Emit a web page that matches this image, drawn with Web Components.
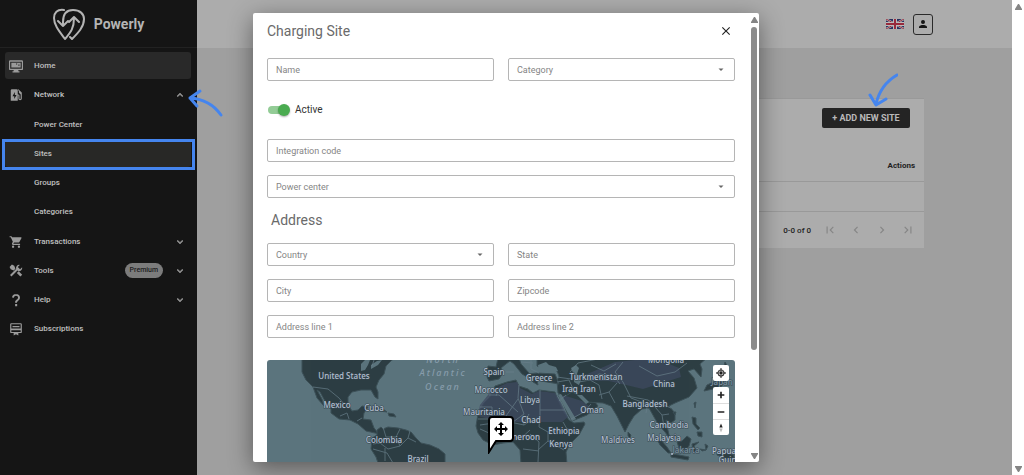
<!DOCTYPE html>
<html lang="en">
<head>
<meta charset="utf-8">
<title>Powerly</title>
<style>
html,body{margin:0;height:100%}
body{font-family:Roboto,"Liberation Sans",sans-serif;font-size:9px;background:#fff}
</style>
</head>
<body>
<power-app></power-app>
<script>
const define = (name, html, setup) => {
  const t = document.createElement('template');
  customElements.define(name, class extends HTMLElement {
    connectedCallback() {
      if (this.shadowRoot) return;
      t.innerHTML = typeof html === 'function' ? html(this) : html;
      this.attachShadow({mode: 'open'}).append(t.content.cloneNode(true));
      if (setup) setup(this, this.shadowRoot);
    }
  });
};

const icons = {
  home: '<path fill-rule="evenodd" d="M2 2h20a2 2 0 0 1 2 2v13a2 2 0 0 1-2 2h-6v2h2v2H6v-2h2v-2H2a2 2 0 0 1-2-2V4a2 2 0 0 1 2-2zm0 2.500v12h20v-12zM4 6.500h16v8H4zm8 1v2h2v-2zm4 2v2h2v-2z"/>',
  station: '<path fill-rule="evenodd" d="M5 2h8a2 2 0 0 1 2 2v7h1a2 2 0 0 1 2 2v5a1 1 0 0 0 2 0V11l-3-3V5l-2-2 1-1 5 5a2 2 0 0 1 1 2v9a3 3 0 0 1-6 0v-5h-1v9H3V4a2 2 0 0 1 2-2zm5 5-4 7h3v5l4-7h-3z"/>',
  cart: '<path d="M7 18a2 2 0 1 0 0 4 2 2 0 0 0 0-4zM1 2v2h2l3.600 7.600-1.400 2.400C4.500 15.400 5.500 17 7 17h12v-2H7.400l1.200-2h7.400c.8 0 1.400-.4 1.800-1l3.500-6.500C21.700 4.800 21.200 4 20.400 4H5.200l-.9-2zm16 16a2 2 0 1 0 0 4 2 2 0 0 0 0-4z"/>',
  tools: '<path d="M3 20 14.500 8.500M9 9l-5-5" stroke="currentColor" stroke-width="3.500" fill="none"/><path d="M15 14l6 6" stroke="currentColor" stroke-width="4.500"/><path d="M22.500 5.500 19 9l-4-4 3.500-3.500a5.500 5.500 0 0 0-6 7.500l3 3a5.500 5.500 0 0 0 7-6.500zM1 5l4-4 4 2 2 5-3 3-5-2z"/>',
  help: '<path d="M10.500 19h3.500v3.500h-3.500zM12 1.500C8 1.500 5.500 4 5.200 7.500l3.200.6C8.600 6 10 4.600 12 4.600c2.100 0 3.500 1.200 3.500 3 0 1.600-.9 2.500-2.300 3.700-1.700 1.500-2.800 2.700-2.800 5.400h3.200c0-1.600.9-2.400 2.200-3.500 1.700-1.500 3-3 3-5.600 0-3.600-2.800-6.100-6.800-6.100z"/>',
  subs: '<path fill-rule="evenodd" d="M4 2h16a2 2 0 0 1 2 2v13a2 2 0 0 1-2 2h-4v4l-4-2-4 2v-4H4a2 2 0 0 1-2-2V4a2 2 0 0 1 2-2zm0 2v7h16V4zm0 10v3h16v-3zm2-7h12v2H6z"/>',
  up: '<path d="m12 8-6 6 1.500 1.500L12 11l4.500 4.500L18 14z" stroke="currentColor"/>',
  down: '<path d="M7.500 8.500 12 13l4.500-4.500L18 10l-6 6-6-6z" stroke="currentColor"/>',
  person: '<path d="M12 12a4 4 0 1 0 0-8 4 4 0 0 0 0 8zm0 2c-2.700 0-8 1.300-8 4v2h16v-2c0-2.700-5.300-4-8-4z"/>',
  close: '<path d="M19 6.400 17.600 5 12 10.600 6.400 5 5 6.400l5.600 5.600L5 17.600 6.400 19l5.600-5.600 5.600 5.600 1.400-1.400-5.600-5.600z"/>',
  caret: '<path d="m7 9 5 5 5-5z"/>',
  first: '<path d="M18.400 16.600 13.800 12l4.600-4.600L17 6l-6 6 6 6zM6 6h2v12H6z"/>',
  prev: '<path d="M15.400 7.400 14 6l-6 6 6 6 1.400-1.400L10.800 12z"/>',
  next: '<path d="M10 6 8.600 7.400l4.600 4.600-4.600 4.600L10 18l6-6z"/>',
  last: '<path d="M5.600 7.400l4.600 4.600-4.600 4.600L7 18l6-6-6-6zM16 6h2v12h-2z"/>',
  locate: '<path fill-rule="evenodd" d="M11 1h2v3a8 8 0 0 1 7 7h3v2h-3a8 8 0 0 1-7 7v3h-2v-3a8 8 0 0 1-7-7H1v-2h3a8 8 0 0 1 7-7zm1 5a6 6 0 1 0 0 12 6 6 0 0 0 0-12zm0 2.500a3.500 3.500 0 1 1 0 7 3.500 3.500 0 0 1 0-7z" stroke="currentColor"/>',
  plus: '<path d="M10 4h4v6h6v4h-6v6h-4v-6H4v-4h6z"/>',
  minus: '<path d="M4 10h16v4H4z"/>',
  compass: '<path d="m12 1 4 10H8z"/><path fill="#bbb" d="m12 23 4-10H8z"/>'
};
define('p-icon', el => `<style>:host{display:block;flex:none;width:var(--size,14px);height:var(--size,14px)}svg{display:block;width:100%;height:100%;fill:currentColor}</style>
<svg viewBox="0 0 24 24" aria-hidden="true">${icons[el.getAttribute('name')]}</svg>`);

define('brand-logo', `<style>
:host{display:flex;align-items:center;justify-content:center;gap:9px;height:47px;border-bottom:1px solid #222;color:#b4b4b4;font-size:14px;font-weight:700;line-height:20px}
svg{width:32px;height:32px;fill:none;stroke:currentColor;stroke-width:2;stroke-linecap:round;stroke-linejoin:round}
</style>
<svg viewBox="0 0 32 32" aria-hidden="true"><path d="M11 2C4 1 1 5 1 10c0 7 5 13 11 21 6-7 9-11 9-21M16 14l5-5 5 5"/><path d="M10 18v-4C10 6 13 2 20 2s11 4 11 9c0 8-6 14-12 20l-2-2M5 13l5 5 5-5"/></svg><span>Powerly</span>`);

define('nav-item', el => {
  const i = el.getAttribute('icon'), c = el.getAttribute('chevron');
  return `<style>
:host{display:block;position:relative}
a{display:flex;align-items:center;height:27px;padding:0 5px 0 4px;gap:11px;border-radius:3px;color:#c0c0c0;text-decoration:none;font-size:8px;font-weight:500;line-height:12px}
.text{flex:1}
.lead{color:#9b9b9b}
.blank{width:14px}
.chev{--size:12px;color:#999}
:host([active]) a{background:#292929}
:host([marked]) a{background:#282826}
:host([marked])::after{content:"";position:absolute;inset:-1px -4px -3px -3px;border:3px solid #4585ee;pointer-events:none}
</style>
<a href="#">${i ? `<p-icon class="lead" name="${i}"></p-icon>` : '<span class="blank"></span>'}<span class="text">${el.getAttribute('label')}</span><slot></slot>${c ? `<p-icon class="chev" name="${c}"></p-icon>` : ''}</a><slot name="note"></slot>`;
});

define('blue-arrow', el => `<style>:host{display:block;position:absolute;z-index:2;pointer-events:none}svg{display:block;fill:none;stroke:#4585ee;stroke-width:3;stroke-linecap:round;stroke-linejoin:round}</style>
${el.getAttribute('kind') === 'left'
  ? '<svg width="37" height="30" viewBox="0 0 37 30"><path d="M13 3 3 10l7 8M3 10c14 1 24 7 31 17"/></svg>'
  : '<svg width="31" height="35" viewBox="0 0 31 35"><path d="M3 22l6 10 10-6M9 31C12 18 18 9 30 2"/></svg>'}`);

define('side-bar', `<style>
:host{display:block;flex:none;width:197px;background:#151515}
nav{display:flex;flex-direction:column;gap:2px;padding:4px 6px 0 5px}
.sub{display:flex;flex-direction:column;gap:2px;margin:1px 0}
.pill{background:#7c7c7c;color:#1c1c1c;border-radius:8px;padding:0 5px;font-size:7px;line-height:15px}
blue-arrow{left:182px;top:7px}
</style>
<brand-logo></brand-logo>
<nav aria-label="Main">
<nav-item icon="home" label="Home" active></nav-item>
<nav-item icon="station" label="Network" chevron="up"><blue-arrow slot="note" kind="left"></blue-arrow></nav-item>
<div class="sub">
<nav-item label="Power Center"></nav-item><nav-item label="Sites" marked></nav-item><nav-item label="Groups"></nav-item><nav-item label="Categories"></nav-item>
</div>
<nav-item icon="cart" label="Transactions" chevron="down"></nav-item>
<nav-item icon="tools" label="Tools" chevron="down"><span class="pill">Premium</span></nav-item>
<nav-item icon="help" label="Help" chevron="down"></nav-item>
<nav-item icon="subs" label="Subscriptions"></nav-item>
</nav>`);

define('top-bar', `<style>
:host{display:flex;align-items:center;justify-content:flex-end;gap:9px;height:48px;padding-right:79px;background:#acacac}
button{width:20px;height:21px;padding:0;border:1px solid #2a2a2a;border-radius:3px;background:none;color:#151515;display:grid;place-items:center;--size:12px}
</style>
<svg width="18" height="10" viewBox="0 0 18 10" role="img" aria-label="English"><rect width="18" height="10" fill="#28315f"/><path d="M0 0l18 10M18 0 0 10" stroke="#bbb" stroke-width="2"/><path d="M0 0l18 10M18 0 0 10" stroke="#98303f"/><path d="M9 0v10M0 5h18" stroke="#bbb" stroke-width="4"/><path d="M9 0v10M0 5h18" stroke="#982a3c" stroke-width="2"/></svg>
<button aria-label="Account"><p-icon name="person"></p-icon></button>`);

define('sites-card', `<style>
:host{display:block;margin:50px 88px 0;background:#acacac;color:#222;border-top:1px solid #999}
.bar{position:relative;display:flex;justify-content:flex-end;padding:9px 14px;height:33px}
.add{width:88px;height:20px;padding:0;border:0;border-radius:2px;background:#242424;color:#b9b9b9;font:700 9px/20px Roboto,sans-serif;white-space:nowrap}
table{width:100%;border-collapse:collapse}
th{height:31px;padding:0 9px;text-align:right;font-size:8px;font-weight:700;border-bottom:1px solid #999}
td{height:29px;padding:0;border-bottom:1px solid #999}
.pages{display:flex;align-items:center;justify-content:flex-end;height:36px;padding-right:9px;gap:12px;font-size:8px;font-weight:500}
.pages button{border:0;padding:0;background:none;color:#858585;--size:14px}
blue-arrow{right:26px;top:-26px}
</style>
<div class="bar"><button class="add">+ ADD NEW SITE</button><blue-arrow kind="down"></blue-arrow></div>
<table><thead><tr><th>Actions</th></tr></thead><tbody><tr><td></td></tr></tbody></table>
<div class="pages"><span>0-0 of 0</span><button aria-label="First page"><p-icon name="first"></p-icon></button><button aria-label="Previous page"><p-icon name="prev"></p-icon></button><button aria-label="Next page"><p-icon name="next"></p-icon></button><button aria-label="Last page"><p-icon name="last"></p-icon></button></div>`);

define('scroll-rail', `<style>
:host{display:flex;flex-direction:column;align-items:center;justify-content:space-between;flex:none;padding:4px 0 3px;box-sizing:border-box}
svg{display:block;width:7px;height:6px;fill:#858585;flex:none}
.thumb{width:6px;height:var(--thumb,0px);border-radius:3px;background:#8b8b8b;margin-bottom:auto;margin-top:4px}
</style>
<svg viewBox="0 0 7 6"><path d="M3 0h1l3 5v1H0V5z"/></svg><div class="thumb"></div><svg viewBox="0 0 7 6"><path d="M3 6h1l3-5V0H0v1z"/></svg>`);

define('form-field', el => {
  const sel = el.hasAttribute('select'), l = el.getAttribute('label');
  return `<style>
:host{display:grid;min-width:0;height:23px;align-items:center}
:host([wide]){grid-column:1/-1}
input,select,label,p-icon{grid-area:1/1}
input,select{appearance:none;box-sizing:border-box;width:100%;height:23px;margin:0;padding:0 8px;border:1px solid #b5b5b5;border-radius:2px;background:#fff;color:#333;font:9px Roboto,sans-serif;outline:0}
label{padding-left:9px;color:#858585;font-size:9px;line-height:12px;pointer-events:none}
input:focus+label,input:not(:placeholder-shown)+label{visibility:hidden}
p-icon{--size:12px;justify-self:end;margin-right:8px;color:#666;pointer-events:none}
</style>
${sel ? '<select id="f"><option value=""></option></select>' : '<input id="f" type="text" placeholder=" ">'}<label for="f">${l}</label>${sel ? '<p-icon name="caret"></p-icon>' : ''}`;
});

define('toggle-switch', `<style>
:host{display:flex;align-items:center;grid-column:1/-1;gap:5px;height:32px;padding-left:1px;font-size:9px;line-height:14px;color:#333}
input{appearance:none;position:relative;margin:0;width:22px;height:12px;display:grid;align-items:center}
input::before,input::after{content:"";grid-area:1/1}
input::before{width:18px;height:8px;border-radius:4px;background:#93cc96}
input::after{width:12px;height:12px;border-radius:50%;background:#4aab50;justify-self:end;box-shadow:0 1px 2px #0005}
input:not(:checked)::after{justify-self:start;background:#eee}
label{font-size:10px}
</style><input id="s" type="checkbox" role="switch" checked><label for="s"><slot></slot></label>`);

const label = (x, y, s, cls = '') => `<text x="${x}" y="${y}" class="${cls}">${s}</text>`;
define('world-map', `<style>
:host{display:block;position:relative;overflow:hidden;border-radius:3px 3px 0 0;background:#5b747d}
.map{position:absolute;inset:0;width:100%;height:100%}
.land{fill:#2d3e43;stroke:#3d5158;stroke-width:1}
.dry{fill:#3f4960}
.line{fill:none;stroke:#687f8a;stroke-width:1;opacity:.7}
.water{fill:#5b747d}
text{font:500 8px "Noto Sans",sans-serif;fill:#b3bfd0;stroke:#35464f;stroke-width:1;paint-order:stroke;text-anchor:middle}
text.sea{font-size:9px;font-style:italic;fill:#879cab;stroke:none;letter-spacing:2px}
text.dim{fill:#7d93a2}
.pin{position:absolute;left:221px;top:56px}
.tools{position:absolute;right:6px;top:5px;display:flex;flex-direction:column;gap:6px}
.box{background:#fff;border-radius:2px;overflow:hidden}
button{display:grid;place-items:center;width:16px;height:16px;padding:0;border:0;background:none;color:#222;--size:10px}
button+button{border-top:1px solid #ddd}
</style>
<svg class="map" viewBox="0 0 468 102" preserveAspectRatio="xMinYMin slice" role="img" aria-label="World map">
<g class="land">
<path d="M35-2v14l4 8 7 7 4 11 7 8-2-7-5-9 3 2 6 11 5 6v4l8 6 11 1 8 4 8 7 9 2 4 1-5-6-3-8-8-1 1-6 4-6-6-1-4 4-6 1-4-6v-8l4-5 9-2 10 0 4 7 3 2 0-7-2-5 3-7 5-6 2-8 6-6 10-5 12-6v-3z"/>
<path d="M103 49l6-2 7 2 4 3-8-1-3-2zM121 53l6 1 2 3-7-1z"/>
<path d="M110 70l4-3 2 2 5-2 10 1 8 2 5 2 5 6 5 5 9 2 9 4 6 5v12h-66l-3-9-5-8 1-11 5-3z"/>
<path d="M221 6l8 1 2-9h21l2 6 8 9-2 4-5-3-8-10-4-3-4 3-5 4 2 5-4 6-10 2-2-4z"/>
<path d="M228 26l12-4 9-2 3 6 9 3 5 4 6-3 16 2 2 6 6 13 6 9 5 3 10-1 1 2-6 11-9 9-4 8 1 12h-46l-1-14-7-8-10 1-10 2-10-5-5-7-2-7 2-12 6-11 6-6z"/>
<path d="M291 35l5 8 5 12 4 6 15-6 11-9-3-4-9-2-7-6-7-4z"/>
<path d="M252-2h18l0 8 7 3 8-1 5 3 2 5-2 5 1 12 6 4 8-5 6 3 8 7 17 1 8 3 6 10 8 16 4-8 5-8 8-7 7-1 5 9 4 7 7 8 5 7-3-13-1-6 5 3 4-3 0-7-6-7 6-3 14-6 8-9-3-10-6-7 6-2 7 8 1-8-2-5 15-13z"/>
<path d="M261 14l9-1 18 1 4 10-18-3-4-1 1 5-5-3z"/>
<path d="M361 72l3 3-1 3-2-2zM389 77l5 3 6 7 4 6-3 0-8-8zM404 94l8 1 10 2-1 3-17-3zM410 82l5-1 5-5 4 3-2 7-3 4-7-2zM425 84l7-2-5 4 2 5-3 1zM425 57l4 1 0 6 4 4-2 2-5-6zM430 72l5 0 0 5-4-1zM406 52l3 0-1 3zM427 43l2-1-1 6zM437 31l3-6 9-4 6-7 3-12 3 5-3 10-3 9-9 3zM438 84l3 2-2 4zM450 91l9 1 8 3v7l-9-4-8-3zM433 89l6 1-4 1z"/>
</g>
<g class="dry"><path d="M225 30l15-7 10-1 3 6 12 6 7-3 16 2 6 10 7 14-6 5-34 0-27 0-23-6 2-11zM293 36l6 0 16 5 8 6-14 10-7-3zM318 15l30-13 40-4 24 10 2 9-38 12-34-8-19 0z" opacity=".75"/></g>
<g class="water"><path d="M271 5l8-3 3 3 7 2 2 4-8 0-11 1zM304 8l5-3 3 3-2 6 4 6-2 5-5-3 0-7zM94 4l4-4 5 0-2 5-3 5-4 1zM104 5l6-4 5-1-4 5-7 4zM291 35l3-1 15 25-4 2zM310 35l5 0 7 7-3 2z"/></g>
<g class="line">
<path d="M46 27l15 2 11 9 5 6M73 56l7-3 2 6M90 61l5-3M116 67l3 10 10 0 4 9-12 3-8-6-7 1M129 77l4-8M133 86l8-8 2-7M141 78l8 4M118 88l0 13M106 89l14 4 6 10M107 0l-2 6"/>
<path d="M222 35h10l19 17M213 47h12v12h-14M232 28l-3 8M252 25l-1 13 6 16M273 30v25M251 39l-12 17M257 54l-11 8M273 50h25M262 54l-6 11M243 62l14 3 6-4M273 55l-1 12 9 5 13-2M222 61l3 14M236 61l1 18M213 65l14-2M263 70l-11 10M263 74l9 8-1 20M281 72l0 9 16 9M281 81l-10 9M256 89l16 2M296 62l4 7 10 2M213 69l9 4 4 8M230 68l10-2"/>
<path d="M299 35l-7 6M304 59l13-7 7-8M290 22l12-2 6 13M303 12l8-9 20-4M312 22l11-2 9 5 3 14M323 20l9-6 15 2 6 8M332 35l10-3 8-9M342 32l6 11M356 22l-8-10 8-10M356 22l8 16 16 6M360 36l21 4 7 5M388 47l7 8 2 12M395 55l7-1M381 42l-2 11M372 6l18 10 18-4 12-9M324 5l13 6 12-7M290 17l14 2M264 0l0 9 8 4M254 2l12 1M239 12l8 0M390 42l14 6"/>
</g>
${label(77, 19, 'United States')}${label(70, 48, 'Mexico')}${label(107, 51, 'Cuba')}${label(117, 83, 'Colombia')}${label(151, 102, 'Brazil')}
${label(176, 3, 'North', 'sea')}${label(176, 16, 'Atlantic', 'sea')}${label(176, 30, 'Ocean', 'sea')}
${label(227, 15, 'Spain')}${label(224, 33, 'Morocco')}${label(217, 55, 'Mauritania')}${label(272, 21, 'Greece')}${label(329, 20, 'Turkmenistan')}${label(303, 32, 'Iraq')}${label(321, 32, 'Iran')}${label(263, 43, 'Libya')}${label(325, 53, 'Oman')}${label(264, 63, 'Chad')}${label(253, 80, 'Cameroon')}${label(297, 74, 'Ethiopia')}${label(294, 87, 'Kenya')}${label(351, 83, 'Maldives')}${label(397, 27, 'China')}${label(399, 3, 'Mongolia')}${label(378, 47, 'Bangladesh')}${label(402, 68, 'Cambodia', '')}${label(397, 81, 'Malaysia')}${label(419, 93, 'Jakarta', 'dim')}${label(455, 25, 'Japan', 'dim')}${label(457, 94, 'Papua')}${label(465, 103, 'Guinea')}
<circle cx="405" cy="94" r="1" fill="#adb9cb"/>
</svg>
<svg class="pin" width="26" height="38" viewBox="0 0 26 38" aria-hidden="true"><path d="M4 1h18q3 0 3 3v18q0 3-3 3H8L1 36V4q0-3 3-3z" fill="#fff" stroke="#000" stroke-width="2"/><path d="M13 8v11M8 13h11" stroke="#000" stroke-width="2"/><path d="m13 6 3 3h-6zM13 20l3-3h-6zM6 13l3-3v6zM20 13l-3-3v6z"/></svg>
<div class="tools"><div class="box"><button aria-label="Find my location"><p-icon name="locate"></p-icon></button></div>
<div class="box"><button aria-label="Zoom in"><p-icon name="plus"></p-icon></button><button aria-label="Zoom out"><p-icon name="minus"></p-icon></button><button aria-label="Reset north"><p-icon name="compass"></p-icon></button></div></div>`);

define('site-dialog', `<style>
:host{display:flex;width:50%;box-sizing:border-box;background:#fff;border-radius:2px;box-shadow:0 6px 24px rgba(0,0,0,.45)}
.body{flex:1;min-width:0;display:flex;flex-direction:column;padding:8px 14px 0;overflow:hidden}
header{display:flex;align-items:center;justify-content:space-between;height:20px;margin-bottom:17px}
h2,h3{margin:0;color:#6a6a6a;font-weight:400;font-size:14px;line-height:19px}
h3{grid-column:1/-1;padding:0 4px}
header button{border:0;padding:0;margin-right:2px;background:none;color:#222;--size:14px}
.form{display:grid;grid-template-columns:1fr 1fr;gap:13px 14px}
world-map{flex:1;margin-top:22px}
scroll-rail{width:10px;--thumb:323px}
</style>
<section class="body"><header><h2>Charging Site</h2><button aria-label="Close"><p-icon name="close"></p-icon></button></header>
<div class="form">
<form-field label="Name"></form-field><form-field label="Category" select></form-field>
<toggle-switch>Active</toggle-switch>
<form-field label="Integration code" wide></form-field>
<form-field label="Power center" select wide></form-field>
<h3>Address</h3>
<form-field label="Country" select></form-field><form-field label="State"></form-field>
<form-field label="City"></form-field><form-field label="Zipcode"></form-field>
<form-field label="Address line 1"></form-field><form-field label="Address line 2"></form-field>
</div><world-map></world-map></section><scroll-rail></scroll-rail>`);

define('power-app', `<style>
:host{display:flex;min-height:100vh}
.view{position:relative;flex:1;display:flex;min-width:0}
main{flex:1;min-width:0;background:#9f9f9f}
.overlay{position:absolute;inset:0;display:flex;justify-content:center;padding:13px 0}
.rail{width:12px;background:#fff}
</style>
<div class="view"><side-bar></side-bar><main><top-bar></top-bar><sites-card></sites-card></main>
<div class="overlay"><site-dialog role="dialog" aria-label="Charging Site"></site-dialog></div></div>
<scroll-rail class="rail"></scroll-rail>`);
</script>
</body>
</html>
